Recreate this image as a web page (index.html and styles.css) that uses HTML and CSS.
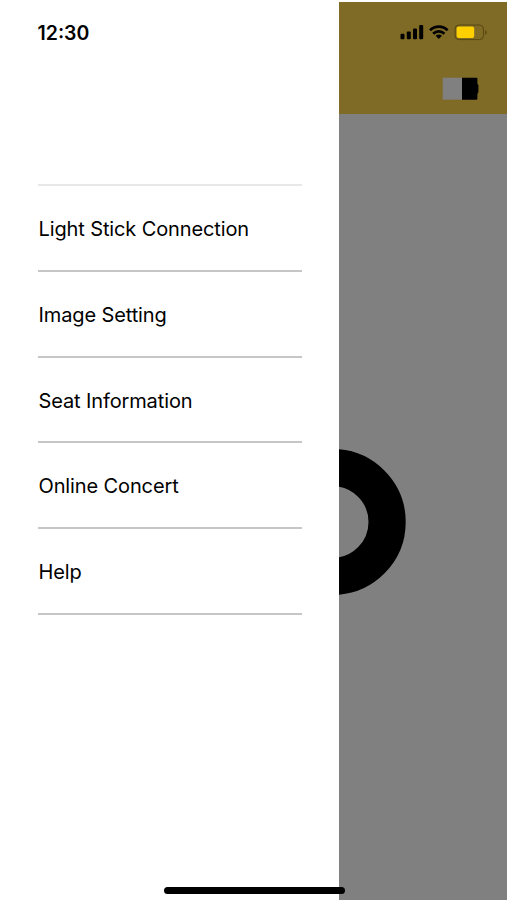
FILE: index.html
```html
<!DOCTYPE html>
<html lang="en">
<head>
<meta charset="utf-8">
<title>Menu</title>
<link rel="stylesheet" href="styles.css">
</head>
<body>
<div class="screen">
  <nav class="drawer">
    <div class="time">12:30</div>
    <ul class="menu">
      <li>Light Stick Connection</li>
      <li>Image Setting</li>
      <li>Seat Information</li>
      <li>Online Concert</li>
      <li>Help</li>
    </ul>
  </nav>
  <main class="page">
    <header class="header">
      <svg class="status" width="88" height="18" viewBox="0 0 88 18">
        <g fill="#000">
          <rect x="0.5" y="10.8" width="4" height="5.4" rx="1"/>
          <rect x="6.8" y="8.4" width="4" height="7.8" rx="1"/>
          <rect x="13" y="5.4" width="4" height="10.8" rx="1"/>
          <rect x="19.2" y="2" width="4" height="14.2" rx="1"/>
          <path d="M35.7 12.8a4.4 4.4 0 0 1 6.2 0L38.8 16z"/>
        </g>
        <g fill="none" stroke="#000" stroke-width="2.7">
          <path d="M30 7.2a12.6 12.6 0 0 1 17.6 0"/>
          <path d="M33.2 10.7a8 8 0 0 1 11.2 0"/>
        </g>
        <rect x="55.1" y="2" width="28.4" height="14.6" rx="4" fill="none" stroke="#57480f"/>
        <rect x="56.6" y="3.6" width="17.6" height="11.4" rx="2" fill="#ffd000"/>
        <path d="M85.2 7v4.8q1.5-.7 1.5-2.4T85.2 7" fill="#57480f"/>
      </svg>
      <svg class="stick" width="37" height="24" viewBox="0 0 37 24">
        <path d="M.7 .7h19.5v22H.7z" fill="#808080"/>
        <path d="M20 .7h14.5q.9 0 .9 .9v5l1 1.6v7l-1 1.6v5q0 .9-.9 .9H20z"/>
      </svg>
    </header>
    <div class="stage">
      <svg width="68" height="148" viewBox="0 0 68 148">
        <circle cx="-6.3" cy="74" r="54.4" fill="none" stroke="#000" stroke-width="37.2"/>
      </svg>
    </div>
  </main>
  <div class="home"></div>
</div>
</body>
</html>
```
FILE: styles.css
```css
* { box-sizing: border-box; }
body { margin: 0; background: #fff; font-family: Inter, "Liberation Sans", sans-serif; color: #000; }
.screen { position: relative; display: flex; width: 507px; height: 900px; overflow: hidden; }
.drawer { flex: 0 0 338.5px; padding: 21px 36.5px 0 37.5px; }
.time { height: 163px; font-size: 19.5px; font-weight: 600; line-height: 24px; }
.menu { margin: 0; padding: 0; list-style: none; border-top: 2px solid #e8e8e8; }
.menu li { height: 85.8px; padding: 0 1px; border-bottom: 2px solid #c6c6c6; font-size: 20px; letter-spacing: -0.12px; line-height: 86px; white-space: nowrap; }
.page { flex: 1; margin-top: 1.5px; background: #808080; }
.header { display: flex; flex-direction: column; height: 112.5px; padding: 21.5px 19px 0 0; align-items: flex-end; background: #7f6a26; }
.status { display: block; }
.stick { display: block; margin: 36px 9px 0 0; }
.stage { padding-top: 334px; }
.stage svg { display: block; }
.home { position: absolute; left: 163.5px; top: 887px; width: 181px; height: 6.5px; border-radius: 4px; background: #000; }
```
